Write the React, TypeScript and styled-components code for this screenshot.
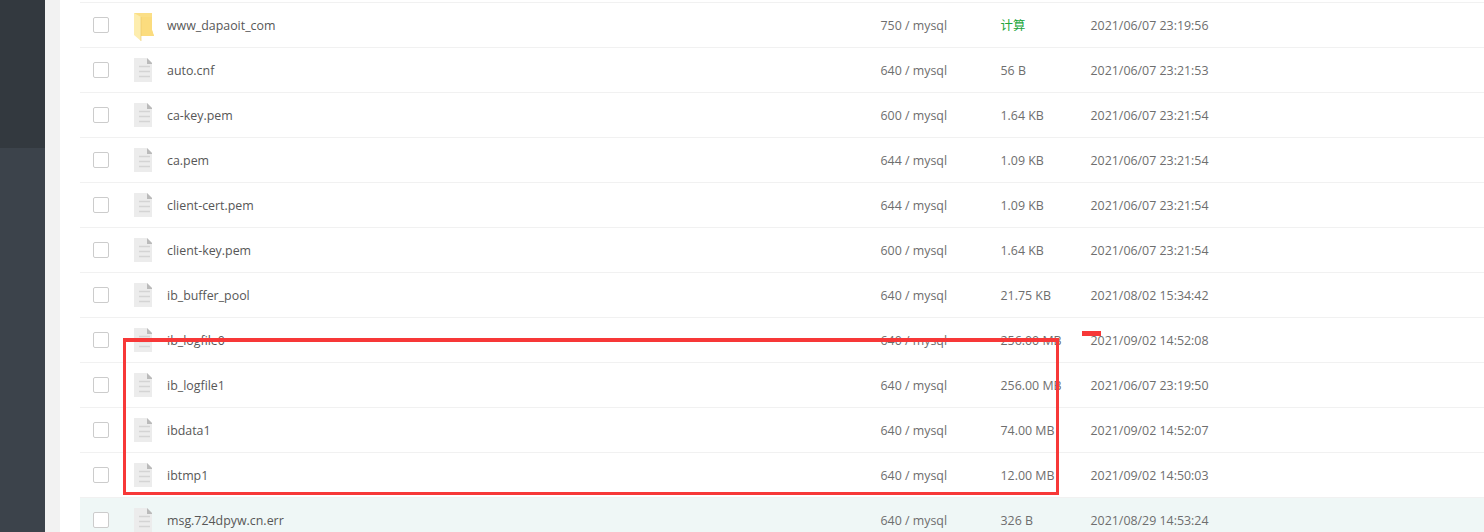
import styled, { createGlobalStyle } from "styled-components";

const GlobalStyle = createGlobalStyle`
  html, body {
    margin: 0;
    height: 532px;
    overflow: hidden;
    background: #f2f2f2;
    font-family: "Open Sans", "Noto Sans CJK SC", sans-serif;
  }
`;

const Page = styled.div`
  position: relative;
  display: flex;
  width: 1484px;
  height: 532px;
  overflow: hidden;
`;

const Sidebar = styled.aside`
  width: 45px;
  flex: none;
  display: flex;
  flex-direction: column;
  background: #3c434b;
`;

const SidebarTop = styled.div`
  height: 148px;
  background: #33393f;
`;

const Main = styled.main`
  margin-left: 15px;
  flex: 1;
  background: #fff;
  padding: 2px 0 0 20px;
`;

const Row = styled.div<{ $active?: boolean }>`
  display: grid;
  grid-template-columns: 55px 32px 713.5px 120px 90px 1fr;
  align-items: center;
  height: 44px;
  border-top: 1px solid #f1f1f1;
  background: ${(p) => (p.$active ? "#eff7f6" : "#fff")};
  color: #6e6e6e;
  font-size: 12.4px;
`;

const CheckCell = styled.div`
  padding-left: 13px;
`;

const Check = styled.span`
  display: block;
  box-sizing: border-box;
  width: 16px;
  height: 16px;
  background: #fff;
  border: 1px solid #ccc;
  border-radius: 2px;
`;

const IconCell = styled.div<{ $dir?: boolean }>`
  display: flex;
  height: 24px;
  margin-left: -1px;
  margin-top: ${(p) => (p.$dir ? "-1px" : "0")};
`;

const Name = styled.span`
  color: #575757;
`;

const Calc = styled.span`
  color: #20a53a;
`;

const Annotation = styled.div`
  position: absolute;
  left: 123px;
  top: 338px;
  box-sizing: border-box;
  width: 936px;
  height: 157px;
  border: 3px solid #f73838;
  border-top-width: 4px;
`;

const Dash = styled.div`
  position: absolute;
  left: 1082px;
  top: 331px;
  width: 19px;
  height: 5px;
  background: #f73838;
`;

const FileIcon = () => (
  <svg width="18" height="24" viewBox="0 0 18 24">
    <path d="M0 .5a.5.5 0 0 1 .5-.5H13l5 5v18.500a.5.5 0 0 1-.5.5H.5a.5.5 0 0 1-.5-.5z" fill="#ececec" />
    <path d="M13 0l5 5v1h-5z" fill="#bababa" />
    <path d="M5 8.500h11M5 13.500h11M5 18.500h11" stroke="#d4d4d4" strokeWidth="1.500" />
  </svg>
);

const FolderIcon = () => (
  <svg width="20" height="28" viewBox="0 0 20 28">
    <path d="M0 0h18v17l2 6H7z" fill="#fbdf87" />
    <path d="M7 4l11 0v13l2 6H7z" fill="#fbdc7e" />
    <path d="M0 0l7 4v24l-7-6z" fill="#fdedae" />
    <path d="M7 4v24" stroke="#e9c766" strokeWidth="0.600" />
  </svg>
);

type FileRow = {
  name: string;
  perm: string;
  size: string;
  time: string;
  isDir?: boolean;
  active?: boolean;
};

const rows: FileRow[] = [
  { name: "www_dapaoit_com", perm: "750 / mysql", size: "计算", time: "2021/06/07 23:19:56", isDir: true },
  { name: "auto.cnf", perm: "640 / mysql", size: "56 B", time: "2021/06/07 23:21:53" },
  { name: "ca-key.pem", perm: "600 / mysql", size: "1.64 KB", time: "2021/06/07 23:21:54" },
  { name: "ca.pem", perm: "644 / mysql", size: "1.09 KB", time: "2021/06/07 23:21:54" },
  { name: "client-cert.pem", perm: "644 / mysql", size: "1.09 KB", time: "2021/06/07 23:21:54" },
  { name: "client-key.pem", perm: "600 / mysql", size: "1.64 KB", time: "2021/06/07 23:21:54" },
  { name: "ib_buffer_pool", perm: "640 / mysql", size: "21.75 KB", time: "2021/08/02 15:34:42" },
  { name: "ib_logfile0", perm: "640 / mysql", size: "256.00 MB", time: "2021/09/02 14:52:08" },
  { name: "ib_logfile1", perm: "640 / mysql", size: "256.00 MB", time: "2021/06/07 23:19:50" },
  { name: "ibdata1", perm: "640 / mysql", size: "74.00 MB", time: "2021/09/02 14:52:07" },
  { name: "ibtmp1", perm: "640 / mysql", size: "12.00 MB", time: "2021/09/02 14:50:03" },
  { name: "msg.724dpyw.cn.err", perm: "640 / mysql", size: "326 B", time: "2021/08/29 14:53:24", active: true },
];

const App = () => {
  return (
    <Page>
      <GlobalStyle />
      <Sidebar>
        <SidebarTop />
      </Sidebar>
      <Main>
        {rows.map((r) => (
          <Row key={r.name} $active={r.active}>
            <CheckCell>
              <Check />
            </CheckCell>
            <IconCell $dir={r.isDir}>{r.isDir ? <FolderIcon /> : <FileIcon />}</IconCell>
            <Name>{r.name}</Name>
            <span>{r.perm}</span>
            {r.isDir ? <Calc>{r.size}</Calc> : <span>{r.size}</span>}
            <span>{r.time}</span>
          </Row>
        ))}
      </Main>
      <Annotation />
      <Dash />
    </Page>
  );
};

export default App;
